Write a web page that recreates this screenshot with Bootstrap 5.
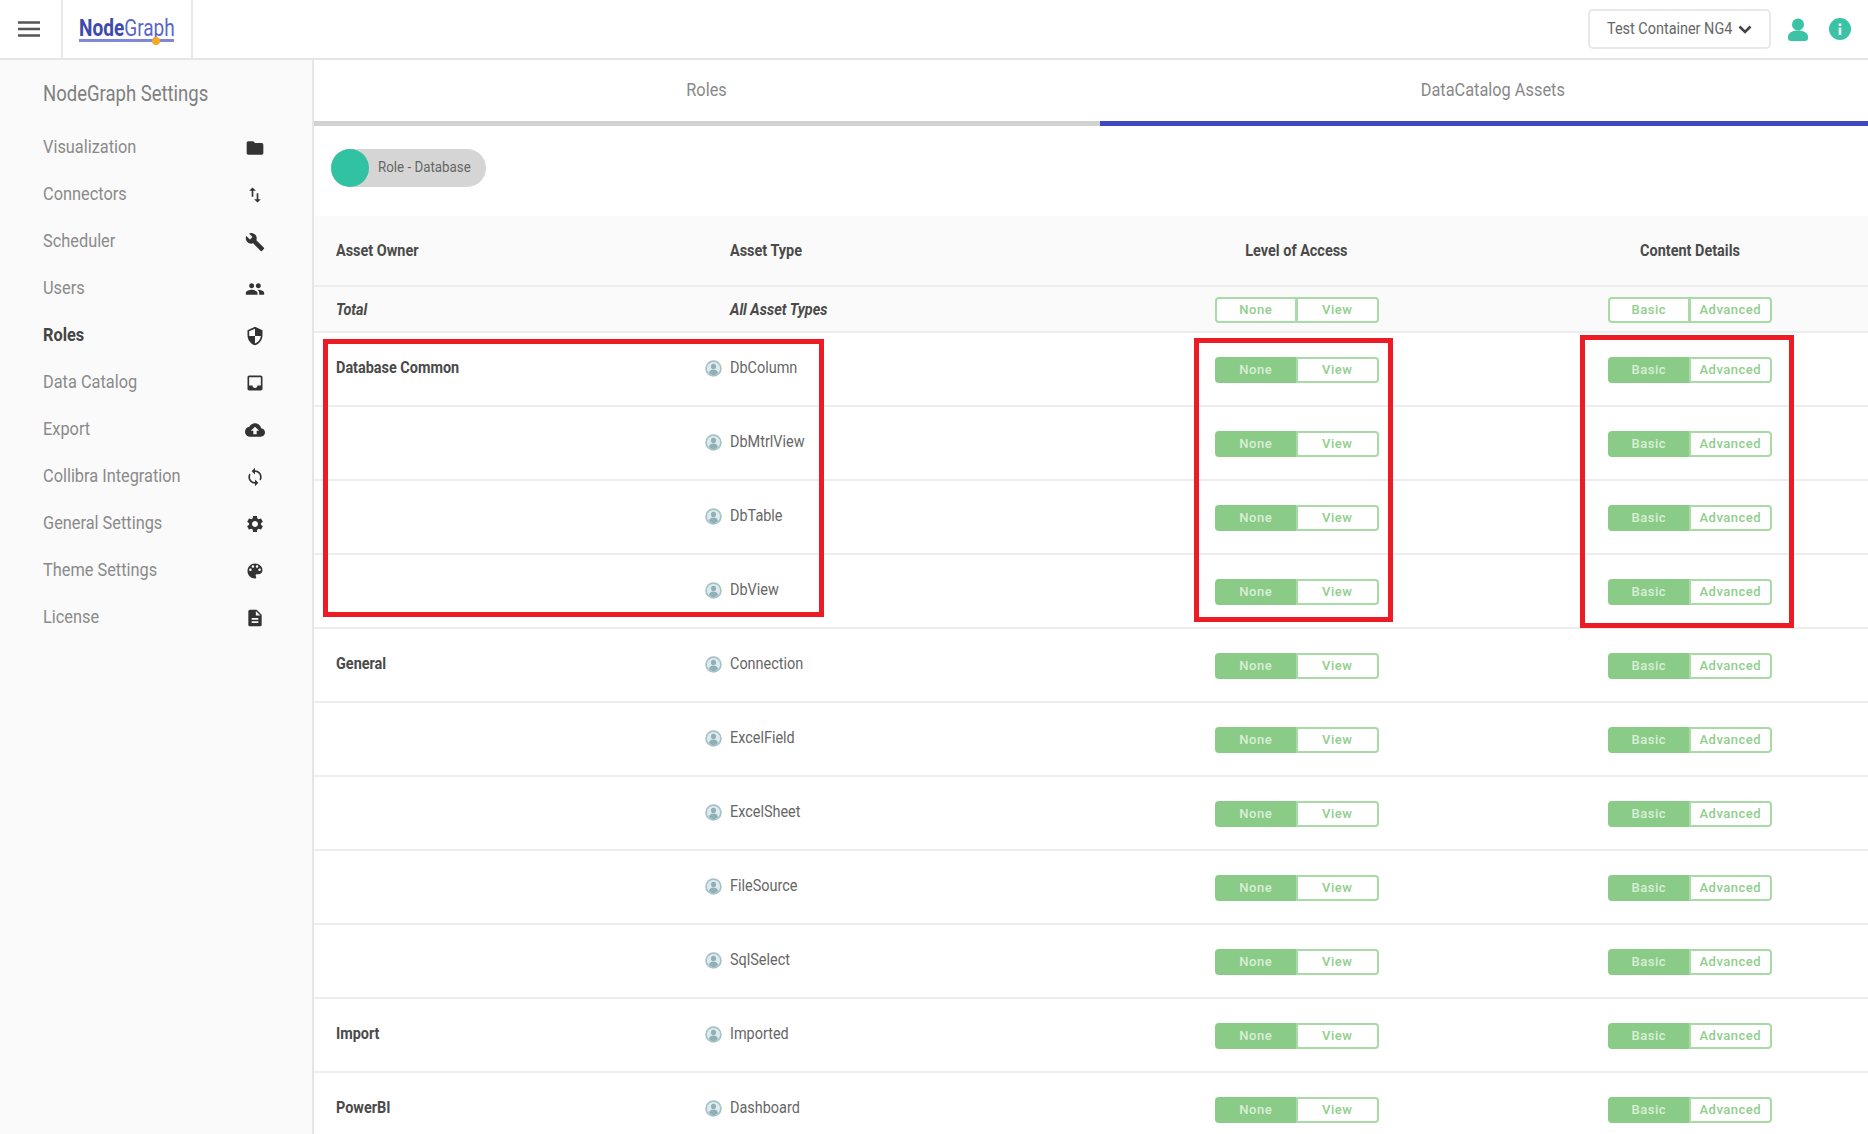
<!DOCTYPE html>
<html lang="en">
<head>
<meta charset="utf-8">
<title>NodeGraph Settings</title>
<link href="https://cdn.jsdelivr.net/npm/bootstrap@5.3.0/dist/css/bootstrap.min.css" rel="stylesheet">
<style>
html,body{height:100%;overflow:hidden}
body{font-family:Roboto,"Liberation Sans",sans-serif;color:#555;background:#fff}
.cn{display:inline-block;transform:scaleX(.86);transform-origin:left center;white-space:nowrap}
.cc{transform-origin:center}
.topbar{height:60px;border-bottom:2px solid #e6e6e6;background:#fff}
.burger{width:63px;border-right:2px solid #e8e8e8;padding-right:3px}
.brand{width:130px;border-right:2px solid #e8e8e8}
.logo-box{position:relative;border-bottom:3px solid #7f88d8;height:24px;width:95px;margin-top:1px;margin-left:-2px;font-size:23.5px;line-height:21px;color:#5a66c6}
.logo-box .cn{transform:scaleX(.81)}
.logo-box b{color:#3e49ae;font-weight:700}
.logo-dot{position:absolute;left:73px;top:19px;width:8px;height:8px;border-radius:50%;background:#f7a823}
.ctn-btn{width:183px;height:40px;border:2px solid #e8e8e8;border-radius:5px;background:#fff;color:#666;font-size:16.8px;padding:0 17px 0 17px;margin-right:17px}
.ctn-btn .cn{margin-right:-21px}
.ctn-btn svg{flex:none}
.top-ic{fill:#3cc3a6;flex:none}
.user-ic{margin-right:21px}
.info-ic{margin-right:17px}
.shell{height:1074px}
.side{width:314px;flex:none;background:#fafafa;border-right:2px solid #e6e6e6;padding:19px 0 0 43px}
.side-title{font-size:21.5px;color:#808080;height:30px;line-height:30px;margin-bottom:15px}
.side-item{height:47px;font-size:19px;color:#8a8a8a;padding-right:47px}
.side-item.on{color:#444;font-weight:700}
.side-item svg{width:20px;height:20px;fill:#333}
.main-pane{flex:1 1 auto;min-width:0;overflow:hidden;position:relative}
.main-in{width:1572px}
.tabrow{height:66px}
.tabrow a{flex:1 1 0;text-align:center;color:#888;font-size:19px;height:66px;line-height:60px;border-bottom:5px solid #d2d2d2;text-decoration:none}
.tabrow a.on{border-bottom-color:#3e48c0}
.pill-row{height:90px;padding:23px 0 0 17px}
.role-pill{height:38px;width:155px;background:#d5d5d5;border-radius:19px;font-size:15.5px;color:#666}
.role-dot{flex:none;width:38px;height:38px;border-radius:50%;background:#30c2a2;margin-right:9px}
.asset-table{table-layout:fixed;width:1572px;margin:0;--bs-table-bg:transparent}
.asset-table th,.asset-table td{padding:0;vertical-align:middle;border-bottom:2px solid #ededed;font-size:16.8px;color:#666}
.asset-table thead th{height:70px;background:#fafafa;color:#4a4a4a;font-weight:700;padding-top:1px}
.asset-table .tot td{height:46px;background:#fafafa;font-weight:700;font-style:italic;color:#4a4a4a;padding-top:2px}
.asset-table .rw td{height:74px}
.asset-table .own{padding-left:22px}
.asset-table .own b{color:#4a4a4a}
.asset-table .typ{padding-left:23px;position:relative}
.asset-table .rw .ctr{padding-top:2px}
.asset-table .tx-up{padding-bottom:2px}
.typ svg{position:absolute;left:-2px;top:50%;width:17px;height:17px;margin-top:-9px}
.asset-table .ctr{text-align:center}
.seg{width:164px;height:26px}
.seg .sg{width:82px;padding:0;border:2px solid #a8dba6;background:#fff;color:#8fce8d;font-size:13px;letter-spacing:.5px;font-weight:500;line-height:22px;border-radius:4px}
.seg .sg:first-child{border-top-right-radius:0;border-bottom-right-radius:0}
.seg .sg:last-child{border-top-left-radius:0;border-bottom-left-radius:0;margin-left:-2px}
.seg .sg.fill{background:#8bcb88;border-color:#8bcb88;color:#d8efd6}
.red-box{position:absolute;border:5px solid #ed1c24;pointer-events:none}
.rb1{left:9px;top:279px;width:501px;height:278px}
.rb2{left:880px;top:278px;width:199px;height:284px}
.rb3{left:1266px;top:275px;width:214px;height:293px}
</style>
</head>
<body>
<svg width="0" height="0" class="position-absolute">
<symbol id="acct" viewBox="0 0 24 24"><circle cx="12" cy="12" r="10.500" fill="#dfeaec" stroke="#a5c2c8" stroke-width="2.400"/><circle cx="12" cy="9" r="3.600" fill="#8fb0b8"/><path d="M5.500 18.500c.5-3.500 3.600-5 6.500-5s6 1.500 6.500 5c-1.700 1.800-3.900 3-6.500 3s-4.800-1.200-6.500-3z" fill="#8fb0b8"/></symbol>
</svg>

<header class="topbar d-flex align-items-stretch">
  <div class="burger d-flex align-items-center justify-content-center">
    <svg width="24" height="16" viewBox="0 0 24 16"><path d="M1 1.500h22M1 8h22M1 14.500h22" stroke="#555" stroke-width="2.400" fill="none"/></svg>
  </div>
  <div class="brand d-flex align-items-center justify-content-center">
    <div class="logo-box"><span class="cn"><b>Node</b>Graph</span><span class="logo-dot"></span></div>
  </div>
  <div class="ms-auto d-flex align-items-center">
    <button class="ctn-btn d-flex align-items-center justify-content-between" type="button"><span class="cn">Test Container NG4</span>
      <svg width="14" height="9" viewBox="0 0 14 9"><path d="M1.500 1.500 7 7l5.500-5.500" stroke="#444" stroke-width="2.600" fill="none"/></svg></button>
    <svg class="top-ic user-ic" width="20" height="23" viewBox="0 0 20 23"><circle cx="10" cy="6.500" r="6"/><path d="M0 20v-1c0-4 4-6.500 10-6.500s10 2.500 10 6.500v1a3 3 0 0 1-3 3H3a3 3 0 0 1-3-3z"/></svg>
    <svg class="top-ic info-ic" width="22" height="22" viewBox="0 0 22 22"><circle cx="11" cy="11" r="11"/><path d="M9.700 9.500h2.600V17H9.700zM9.700 5.500h2.600v2.500H9.700z" fill="#e9f8f5"/></svg>
  </div>
</header>

<div class="shell d-flex">
  <aside class="side">
    <div class="side-title"><span class="cn">NodeGraph Settings</span></div>
    <div class="side-item d-flex align-items-center justify-content-between"><span class="cn">Visualization</span><svg viewBox="0 0 24 24"><path d="M10 4H4c-1.100 0-2 .9-2 2v12c0 1.100.9 2 2 2h16c1.100 0 2-.9 2-2V8c0-1.100-.9-2-2-2h-8l-2-2z"/></svg></div>
    <div class="side-item d-flex align-items-center justify-content-between"><span class="cn">Connectors</span><svg viewBox="0 0 24 24"><path d="M16 17.010V10h-2v7.010h-3L15 21l4-3.990h-3zM9 3 5 6.990h3V14h2V6.990h3L9 3z"/></svg></div>
    <div class="side-item d-flex align-items-center justify-content-between"><span class="cn">Scheduler</span><svg viewBox="0 0 24 24"><path d="M22.700 19l-9.100-9.100c.9-2.300.4-5-1.500-6.900-2-2-5-2.400-7.400-1.300L9 6 6 9 1.600 4.700C.4 7.100.9 10.100 2.900 12.100c1.900 1.900 4.600 2.400 6.900 1.500l9.100 9.100c.4.4 1 .4 1.400 0l2.300-2.300c.5-.4.5-1.100.1-1.400z"/></svg></div>
    <div class="side-item d-flex align-items-center justify-content-between"><span class="cn">Users</span><svg viewBox="0 0 24 24"><path d="M16 11c1.660 0 2.990-1.340 2.990-3S17.660 5 16 5c-1.660 0-3 1.340-3 3s1.340 3 3 3zm-8 0c1.660 0 2.990-1.340 2.990-3S9.660 5 8 5C6.340 5 5 6.340 5 8s1.340 3 3 3zm0 2c-2.330 0-7 1.170-7 3.500V19h14v-2.500c0-2.330-4.670-3.500-7-3.500zm8 0c-.29 0-.62.02-.97.05 1.160.84 1.970 1.970 1.970 3.450V19h6v-2.500c0-2.330-4.670-3.500-7-3.500z"/></svg></div>
    <div class="side-item on d-flex align-items-center justify-content-between"><span class="cn">Roles</span><svg viewBox="0 0 24 24"><path d="M12 1 3 5v6c0 5.550 3.840 10.740 9 12 5.160-1.260 9-6.450 9-12V5l-9-4zm0 10.990h7c-.53 4.120-3.280 7.790-7 8.940V12H5V6.300l7-3.110v8.800z"/></svg></div>
    <div class="side-item d-flex align-items-center justify-content-between"><span class="cn">Data Catalog</span><svg viewBox="0 0 24 24"><path d="M19 3H4.990c-1.110 0-1.980.89-1.980 2L3 19c0 1.100.88 2 1.990 2H19c1.100 0 2-.9 2-2V5c0-1.110-.9-2-2-2zm0 12h-4c0 1.660-1.350 3-3 3s-3-1.340-3-3H4.990V5H19v10z"/></svg></div>
    <div class="side-item d-flex align-items-center justify-content-between"><span class="cn">Export</span><svg viewBox="0 0 24 24"><path d="M19.350 10.040C18.670 6.590 15.640 4 12 4 9.110 4 6.600 5.640 5.350 8.040 2.340 8.360 0 10.910 0 14c0 3.310 2.690 6 6 6h13c2.760 0 5-2.240 5-5 0-2.640-2.050-4.780-4.650-4.960zM14 13v4h-4v-4H7l5-5 5 5h-3z"/></svg></div>
    <div class="side-item d-flex align-items-center justify-content-between"><span class="cn">Collibra Integration</span><svg viewBox="0 0 24 24"><path d="M12 4V1L8 5l4 4V6c3.310 0 6 2.690 6 6 0 1.010-.25 1.970-.7 2.800l1.460 1.460C19.540 15.030 20 13.570 20 12c0-4.420-3.580-8-8-8zm0 14c-3.310 0-6-2.690-6-6 0-1.010.25-1.970.7-2.800L5.240 7.740C4.460 8.970 4 10.430 4 12c0 4.420 3.580 8 8 8v3l4-4-4-4v3z"/></svg></div>
    <div class="side-item d-flex align-items-center justify-content-between"><span class="cn">General Settings</span><svg viewBox="0 0 24 24"><path d="M19.140 12.940c.04-.3.06-.61.06-.94 0-.32-.02-.64-.07-.94l2.030-1.580c.18-.14.23-.41.12-.61l-1.920-3.320c-.12-.22-.37-.29-.59-.22l-2.390.96c-.5-.38-1.030-.7-1.620-.94l-.36-2.540c-.04-.24-.24-.41-.48-.41h-3.840c-.24 0-.43.17-.47.41l-.36 2.540c-.59.24-1.130.57-1.620.94l-2.390-.96c-.22-.08-.47 0-.59.22L2.740 8.870c-.12.21-.08.47.12.61l2.030 1.580c-.05.3-.09.63-.09.94s.02.64.07.94l-2.030 1.580c-.18.14-.23.41-.12.61l1.920 3.320c.12.22.37.29.59.22l2.390-.96c.5.38 1.030.7 1.620.94l.36 2.540c.05.24.24.41.48.41h3.840c.24 0 .44-.17.47-.41l.36-2.540c.59-.24 1.130-.56 1.620-.94l2.390.96c.22.08.47 0 .59-.22l1.920-3.320c.12-.22.07-.47-.12-.61l-2.010-1.580zM12 15.600c-1.980 0-3.600-1.620-3.600-3.600s1.620-3.600 3.600-3.600 3.600 1.620 3.600 3.600-1.620 3.600-3.600 3.600z"/></svg></div>
    <div class="side-item d-flex align-items-center justify-content-between"><span class="cn">Theme Settings</span><svg viewBox="0 0 24 24"><path d="M12 3c-4.970 0-9 4.030-9 9s4.030 9 9 9c.83 0 1.500-.67 1.500-1.500 0-.39-.15-.74-.39-1.010-.23-.26-.38-.61-.38-.99 0-.83.67-1.500 1.500-1.500H16c2.760 0 5-2.240 5-5 0-4.420-4.030-8-9-8zm-5.500 9c-.83 0-1.500-.67-1.500-1.500S5.670 9 6.500 9 8 9.670 8 10.500 7.330 12 6.500 12zm3-4C8.670 8 8 7.330 8 6.500S8.670 5 9.500 5s1.500.67 1.500 1.500S10.330 8 9.500 8zm5 0c-.83 0-1.500-.67-1.500-1.500S13.670 5 14.500 5s1.500.67 1.500 1.500S15.330 8 14.500 8zm3 4c-.83 0-1.500-.67-1.500-1.500S16.670 9 17.500 9s1.500.67 1.500 1.500-.67 1.500-1.500 1.500z"/></svg></div>
    <div class="side-item d-flex align-items-center justify-content-between"><span class="cn">License</span><svg viewBox="0 0 24 24"><path d="M14 2H6c-1.100 0-1.990.9-1.990 2L4 20c0 1.100.89 2 1.990 2H18c1.100 0 2-.9 2-2V8l-6-6zm2 16H8v-2h8v2zm0-4H8v-2h8v2zm-3-5V3.500L18.500 9H13z"/></svg></div>
  </aside>

  <main class="main-pane">
    <div class="main-in">
      <nav class="tabrow d-flex">
        <a href="#"><span class="cn cc">Roles</span></a>
        <a href="#" class="on"><span class="cn cc">DataCatalog Assets</span></a>
      </nav>
      <div class="pill-row">
        <div class="role-pill d-flex align-items-center"><span class="role-dot"></span><span class="cn">Role - Database</span></div>
      </div>
      <table class="table asset-table">
        <thead>
          <tr><th class="own"><span class="cn">Asset Owner</span></th><th class="typ"><span class="cn">Asset Type</span></th><th class="ctr"><span class="cn cc">Level of Access</span></th><th class="ctr"><span class="cn cc">Content Details</span></th></tr>
        </thead>
        <tbody>
          <tr class="tot"><td class="own"><span class="cn">Total</span></td><td class="typ"><span class="cn">All Asset Types</span></td>
            <td class="ctr"><div class="btn-group seg"><button class="btn sg" type="button">None</button><button class="btn sg" type="button">View</button></div></td>
            <td class="ctr"><div class="btn-group seg"><button class="btn sg" type="button">Basic</button><button class="btn sg" type="button">Advanced</button></div></td></tr>
          <tr class="rw"><td class="own tx-up"><b class="cn">Database Common</b></td><td class="typ tx-up"><svg><use href="#acct"/></svg><span class="cn">DbColumn</span></td>
            <td class="ctr"><div class="btn-group seg"><button class="btn sg fill" type="button">None</button><button class="btn sg" type="button">View</button></div></td>
            <td class="ctr"><div class="btn-group seg"><button class="btn sg fill" type="button">Basic</button><button class="btn sg" type="button">Advanced</button></div></td></tr>
          <tr class="rw"><td class="own tx-up"></td><td class="typ tx-up"><svg><use href="#acct"/></svg><span class="cn">DbMtrlView</span></td>
            <td class="ctr"><div class="btn-group seg"><button class="btn sg fill" type="button">None</button><button class="btn sg" type="button">View</button></div></td>
            <td class="ctr"><div class="btn-group seg"><button class="btn sg fill" type="button">Basic</button><button class="btn sg" type="button">Advanced</button></div></td></tr>
          <tr class="rw"><td class="own tx-up"></td><td class="typ tx-up"><svg><use href="#acct"/></svg><span class="cn">DbTable</span></td>
            <td class="ctr"><div class="btn-group seg"><button class="btn sg fill" type="button">None</button><button class="btn sg" type="button">View</button></div></td>
            <td class="ctr"><div class="btn-group seg"><button class="btn sg fill" type="button">Basic</button><button class="btn sg" type="button">Advanced</button></div></td></tr>
          <tr class="rw"><td class="own tx-up"></td><td class="typ tx-up"><svg><use href="#acct"/></svg><span class="cn">DbView</span></td>
            <td class="ctr"><div class="btn-group seg"><button class="btn sg fill" type="button">None</button><button class="btn sg" type="button">View</button></div></td>
            <td class="ctr"><div class="btn-group seg"><button class="btn sg fill" type="button">Basic</button><button class="btn sg" type="button">Advanced</button></div></td></tr>
          <tr class="rw"><td class="own tx-up"><b class="cn">General</b></td><td class="typ tx-up"><svg><use href="#acct"/></svg><span class="cn">Connection</span></td>
            <td class="ctr"><div class="btn-group seg"><button class="btn sg fill" type="button">None</button><button class="btn sg" type="button">View</button></div></td>
            <td class="ctr"><div class="btn-group seg"><button class="btn sg fill" type="button">Basic</button><button class="btn sg" type="button">Advanced</button></div></td></tr>
          <tr class="rw"><td class="own tx-up"></td><td class="typ tx-up"><svg><use href="#acct"/></svg><span class="cn">ExcelField</span></td>
            <td class="ctr"><div class="btn-group seg"><button class="btn sg fill" type="button">None</button><button class="btn sg" type="button">View</button></div></td>
            <td class="ctr"><div class="btn-group seg"><button class="btn sg fill" type="button">Basic</button><button class="btn sg" type="button">Advanced</button></div></td></tr>
          <tr class="rw"><td class="own tx-up"></td><td class="typ tx-up"><svg><use href="#acct"/></svg><span class="cn">ExcelSheet</span></td>
            <td class="ctr"><div class="btn-group seg"><button class="btn sg fill" type="button">None</button><button class="btn sg" type="button">View</button></div></td>
            <td class="ctr"><div class="btn-group seg"><button class="btn sg fill" type="button">Basic</button><button class="btn sg" type="button">Advanced</button></div></td></tr>
          <tr class="rw"><td class="own tx-up"></td><td class="typ tx-up"><svg><use href="#acct"/></svg><span class="cn">FileSource</span></td>
            <td class="ctr"><div class="btn-group seg"><button class="btn sg fill" type="button">None</button><button class="btn sg" type="button">View</button></div></td>
            <td class="ctr"><div class="btn-group seg"><button class="btn sg fill" type="button">Basic</button><button class="btn sg" type="button">Advanced</button></div></td></tr>
          <tr class="rw"><td class="own tx-up"></td><td class="typ tx-up"><svg><use href="#acct"/></svg><span class="cn">SqlSelect</span></td>
            <td class="ctr"><div class="btn-group seg"><button class="btn sg fill" type="button">None</button><button class="btn sg" type="button">View</button></div></td>
            <td class="ctr"><div class="btn-group seg"><button class="btn sg fill" type="button">Basic</button><button class="btn sg" type="button">Advanced</button></div></td></tr>
          <tr class="rw"><td class="own tx-up"><b class="cn">Import</b></td><td class="typ tx-up"><svg><use href="#acct"/></svg><span class="cn">Imported</span></td>
            <td class="ctr"><div class="btn-group seg"><button class="btn sg fill" type="button">None</button><button class="btn sg" type="button">View</button></div></td>
            <td class="ctr"><div class="btn-group seg"><button class="btn sg fill" type="button">Basic</button><button class="btn sg" type="button">Advanced</button></div></td></tr>
          <tr class="rw"><td class="own tx-up"><b class="cn">PowerBI</b></td><td class="typ tx-up"><svg><use href="#acct"/></svg><span class="cn">Dashboard</span></td>
            <td class="ctr"><div class="btn-group seg"><button class="btn sg fill" type="button">None</button><button class="btn sg" type="button">View</button></div></td>
            <td class="ctr"><div class="btn-group seg"><button class="btn sg fill" type="button">Basic</button><button class="btn sg" type="button">Advanced</button></div></td></tr>
        </tbody>
      </table>
    </div>
    <div class="red-box rb1"></div>
    <div class="red-box rb2"></div>
    <div class="red-box rb3"></div>
  </main>
</div>
<script src="https://cdn.jsdelivr.net/npm/bootstrap@5.3.0/dist/js/bootstrap.bundle.min.js"></script>
</body>
</html>
